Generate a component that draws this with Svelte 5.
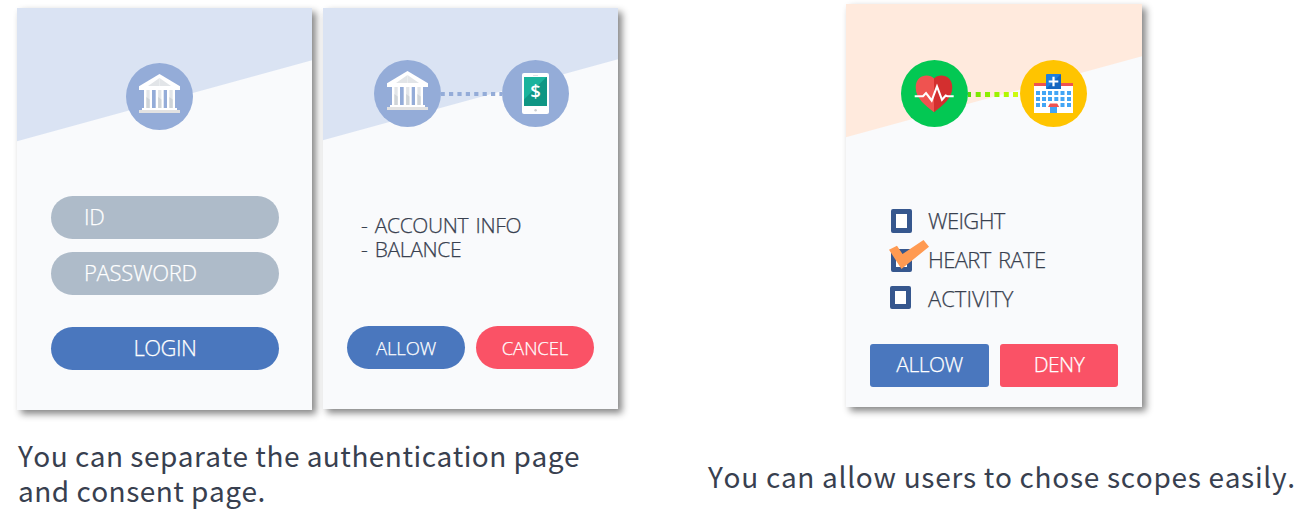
<script>
  const dots = [0, 1, 2, 3, 4, 5, 6, 7]
  const healthDots = [
    { x: 0, color: "#58d80a" },
    { x: 7.7, color: "#7ce800" },
    { x: 17, color: "#8cee00" },
    { x: 26.4, color: "#9cf200" },
    { x: 35.8, color: "#b2f800" },
    { x: 45, color: "#ccfb12" },
  ]
  const windowCols = [16, 22, 28, 34.3, 40.5, 47]
  const windowRows = [31, 37, 43]

  let scopes = $state([
    { name: "WEIGHT", checked: false },
    { name: "HEART RATE", checked: true },
    { name: "ACTIVITY", checked: false },
  ])
</script>

{#snippet bank()}
  <svg class="icon" viewBox="0 0 67 67">
    <circle cx="33.5" cy="33.5" r="33.5" fill="#94acd8" />
    <path d="M33.5 11 54 23.3V27H13v-3.7z" fill="#fff" />
    <path d="M33.5 15 45 23H22z" fill="#e2e5e8" />
    <path d="M33.5 15v8" stroke="#f0f2f4" stroke-width="0.6" />
    {#each [18, 29.7, 41] as x}
      <rect {x} y="27" width="8" height="18" fill="#fff" />
      <rect x={x + 2.4} y="27" width="3.3" height="18" fill="#e2e5e8" />
      <path d="M{x + 2.4} 34l3.3 2.4V45h-3.3z" fill="#cfd4d8" />
    {/each}
    <rect x="16" y="45" width="35" height="2.2" fill="#fff" />
    <rect x="13" y="47" width="41" height="3" fill="#e2e2e2" />
  </svg>
{/snippet}

<main>
  <section class="flow">
    <div class="cards">
      <article class="card login">
        <header>{@render bank()}</header>
        <div class="field id">ID</div>
        <div class="field password">PASSWORD</div>
        <button class="btn submit">LOGIN</button>
      </article>

      <article class="card consent">
        <header>
          {@render bank()}
          <svg class="link" viewBox="0 0 61 5">
            {#each dots as i}
              <rect x={i * 8.4 - 0.4} y="0" width="4.2" height="4" fill="#94acd8" />
            {/each}
          </svg>
          <svg class="icon" viewBox="0 0 67 67">
            <circle cx="33.5" cy="33.5" r="33.5" fill="#94acd8" />
            <rect x="20" y="13" width="27" height="41" rx="2" fill="#fff" />
            <rect x="31" y="15" width="5" height="1" fill="#e2e5e8" />
            <rect x="22" y="17" width="23" height="29" fill="#0f9684" />
            <path d="M22 17h22.5L22 39.5z" fill="#1bb39c" />
            <text x="33.6" y="37.7" class="dollar">$</text>
            <circle cx="33.6" cy="50.3" r="1.2" fill="#c9cdd0" />
          </svg>
        </header>
        <ul>
          <li>- ACCOUNT INFO</li>
          <li>- BALANCE</li>
        </ul>
        <div class="actions">
          <button class="btn">ALLOW</button>
          <button class="btn red">CANCEL</button>
        </div>
      </article>
    </div>
    <p>You can separate the authentication page<br />and consent page.</p>
  </section>

  <section class="scopes">
    <article class="card health">
      <header>
        <svg class="icon" viewBox="0 0 67 67">
          <circle cx="33.5" cy="33.5" r="33.5" fill="#03c853" />
          <path
            d="M33 18.5C29 13.5 14.7 13.5 14.7 27.5 14.7 39 25 45.5 33 52.3z"
            fill="#ef5350"
          />
          <path
            d="M33 18.5C37 13.5 51.3 13.5 51.3 27.5 51.3 39 41 45.5 33 52.3z"
            fill="#d32f2f"
          />
          <path
            d="M13.7 36.2H22l3-3.2 5.7 7.5 5.3-14 5 13.3 3.7-4.3 1.6.7h6.4"
            fill="none"
            stroke="#fff"
            stroke-width="2.1"
          />
        </svg>
        <svg class="link" viewBox="0 0 52 5">
          {#each healthDots as dot}
            <rect x={dot.x} y="0" width={dot.x ? 5 : 3} height="5" fill={dot.color} />
          {/each}
        </svg>
        <svg class="icon" viewBox="0 0 67 67">
          <circle cx="33.5" cy="33.5" r="33.5" fill="#ffc400" />
          <rect x="14" y="23" width="39" height="30" fill="#fff" />
          <rect x="14" y="23" width="39" height="3" fill="#ef5350" />
          <rect x="26" y="14" width="15" height="15" rx="1" fill="#1e7fe0" />
          <path d="M41 14v15H26z" fill="#1565c0" />
          <path d="M33.5 16.7v9.6M28.7 21.5h9.6" stroke="#fff" stroke-width="2.2" />
          {#each windowRows as y}
            {#each windowCols as x}
              <rect {x} {y} width="4" height="4" fill="#42a5f5" />
            {/each}
          {/each}
          <rect x="28" y="43" width="11.2" height="10" fill="#fff" />
          <path d="M30 43.5h7.2l2 3.5H28z" fill="#ef5350" />
          <rect x="30" y="47" width="7" height="6" fill="#42a5f5" />
        </svg>
      </header>
      <div class="options">
        {#each scopes as scope}
          <div class="option">
            <span class="box">
              {#if scope.checked}
                <svg class="check" viewBox="0 0 40 30">
                  <path d="M0 9.7 8 5.7l5.5 8.2L34.5 0 40 6.7 12.5 29z" fill="#ff9a52" />
                </svg>
              {/if}
            </span>
            <span class="name">{scope.name}</span>
          </div>
        {/each}
      </div>
      <div class="actions">
        <button class="btn">ALLOW</button>
        <button class="btn red">DENY</button>
      </div>
    </article>
    <p>You can allow users to chose scopes easily.</p>
  </section>
</main>

<style>
  :global(body) {
    background: #fff;
  }
  main {
    display: flex;
    width: 1313px;
    height: 528px;
    overflow: hidden;
    color: #38404f;
    font-family: "Open Sans", "Noto Sans", sans-serif;
    font-weight: 300;
    font-kerning: none;
  }
  .flow {
    flex: none;
    width: 691px;
    padding: 8px 0 0 17px;
    box-sizing: border-box;
  }
  .scopes {
    flex: none;
    padding-top: 4px;
  }
  .cards {
    display: flex;
    align-items: flex-start;
    gap: 11px;
  }

  .card {
    width: 295px;
    height: 402px;
    background-color: #f9fafc;
    box-shadow: 4px 4px 7px rgba(0, 0, 0, 0.48);
    -webkit-text-stroke: 0.25px;
  }
  .login {
    background-image: linear-gradient(164.65deg, #dae3f3 128px, transparent 129px);
  }
  .consent {
    height: 401px;
    background-image: linear-gradient(164.65deg, #dae3f3 127px, transparent 128px);
  }
  .health {
    width: 296px;
    height: 403px;
    margin-left: 155px;
    background-image: linear-gradient(164.7deg, #ffeadd 128px, transparent 129px);
  }

  header {
    display: flex;
    align-items: center;
    height: 67px;
    padding: 52px 0 0 51px;
  }
  .login header {
    padding: 55px 0 0 109px;
  }
  .health header {
    padding: 56px 0 0 55px;
  }
  .icon {
    flex: none;
    width: 67px;
    height: 67px;
  }
  .link {
    flex: none;
    width: 61px;
    height: 5px;
    margin-top: 1px;
  }
  .health .link {
    width: 52px;
    margin-top: 2px;
  }
  .dollar {
    font: 600 18.5px "Open Sans", sans-serif;
    text-anchor: middle;
    fill: #fff;
    -webkit-text-stroke: 0;
  }

  .field,
  .btn {
    display: block;
    height: 43px;
    padding: 0 0 2px;
    border: none;
    border-radius: 22px;
    box-sizing: border-box;
    color: #fff;
    font: 300 22px/41px "Open Sans", "Noto Sans", sans-serif;
    font-kerning: none;
  }
  .field {
    width: 228px;
    margin-left: 34px;
    padding-left: 33px;
    background: #aebbc9;
    letter-spacing: -0.3px;
  }
  .id {
    margin-top: 66px;
  }
  .password {
    margin-top: 13px;
  }
  .btn {
    background: #4a77be;
    text-align: center;
  }
  .submit {
    width: 228px;
    margin: 32px 0 0 34px;
    letter-spacing: -0.5px;
  }
  .red {
    background: #fa5266;
  }

  ul {
    height: 48px;
    margin: 86px 0 0 38px;
    padding: 0 0 1px;
    list-style: none;
    font-size: 21px;
    line-height: 24px;
    letter-spacing: -0.35px;
    word-spacing: 2.2px;
  }
  .actions {
    display: flex;
    gap: 11px;
    margin: 64px 0 0 24px;
  }
  .actions .btn {
    width: 118px;
    padding-bottom: 1px;
    font-size: 18.5px;
    letter-spacing: -0.1px;
  }
  .health .actions {
    margin-top: 26px;
  }
  .health .actions .btn {
    padding-bottom: 2px;
    border-radius: 3px;
    font-size: 21px;
    letter-spacing: -0.5px;
  }
  .health .actions .btn:first-child {
    width: 119px;
  }

  .options {
    margin: 74px 0 0 45px;
  }
  .option {
    display: flex;
    align-items: center;
    gap: 16px;
    height: 39px;
    font-size: 22px;
    letter-spacing: -0.65px;
    word-spacing: 2.5px;
  }
  .name {
    padding-bottom: 2px;
  }
  .box {
    position: relative;
    width: 21px;
    height: 24px;
    box-sizing: border-box;
    border: 5px solid #36578e;
    border-radius: 2px;
    background: #fff;
  }
  .option:nth-child(2) .box {
    height: 23px;
    margin-top: 1px;
  }
  .option:last-child {
    gap: 17px;
    margin-left: -1px;
    letter-spacing: 0;
  }
  .option:last-child .box {
    height: 23px;
    margin-bottom: 2px;
  }
  .check {
    position: absolute;
    left: -7px;
    top: -14px;
    width: 40px;
    height: 30px;
  }

  p {
    margin: 28px 0 0 1px;
    font-family: "Noto Sans CJK JP", sans-serif;
    font-size: 28px;
    font-weight: 400;
    line-height: 35px;
    letter-spacing: 0.48px;
    white-space: nowrap;
  }
  .scopes p {
    margin: 52px 0 0 17px;
    letter-spacing: 0.7px;
  }
</style>
